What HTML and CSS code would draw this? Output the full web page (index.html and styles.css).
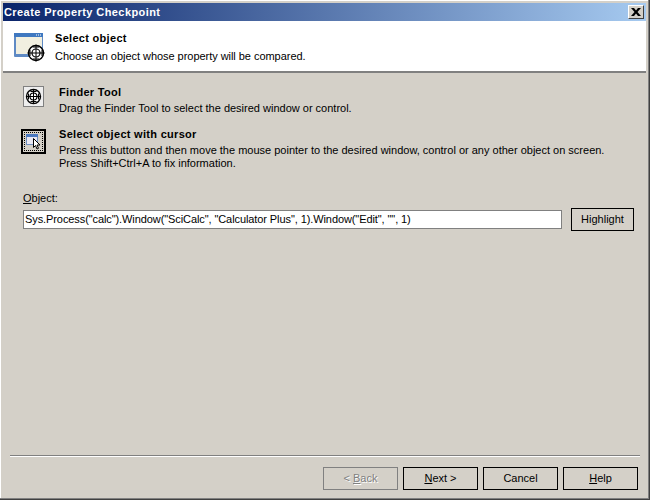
FILE: index.html
```html
<!DOCTYPE html>
<html lang="en">
<head>
<meta charset="utf-8">
<title>Create Property Checkpoint</title>
<link rel="stylesheet" href="styles.css">
</head>
<body>
<div class="window">
  <div class="titlebar">
    <span class="title">Create Property Checkpoint</span>
    <span class="close">
      <svg width="10" height="8" viewBox="0 0 10 8"><path d="M0 0h3l2 2.500L7 0h3L6.500 4 10 8H7L5 5.500 3 8H0l3.500-4z" fill="#000"/></svg>
    </span>
  </div>
  <header class="banner">
    <svg class="banner-icon" width="32" height="30" viewBox="0 0 32 30">
      <rect x="0" y="0" width="29" height="24" rx="1" fill="#5f8ac4"/>
      <rect x="2" y="4" width="26" height="17" fill="#f1efe0"/>
      <rect x="0" y="0" width="29" height="4" fill="#3f78c0"/>
      <path d="M22 2h1M24 2h1M26 2h1" stroke="#fff" fill="none"/>
      <circle cx="22" cy="20" r="7.500" fill="#fff" stroke="#000" stroke-width="1.500"/>
      <circle cx="22" cy="20" r="4" fill="none" stroke="#000" stroke-width="1.200"/>
      <path d="M22 11.500v17M13.500 20h17M19 14h6M19 26h6M16 17v6M28 17v6" stroke="#000" fill="none"/>
    </svg>
    <div class="banner-text">
      <div class="heading">Select object</div>
      <div class="sub">Choose an object whose property will be compared.</div>
    </div>
  </header>
  <main class="content">
    <div class="option option-finder">
      <span class="tool tool-finder">
        <svg width="17" height="17" viewBox="0 0 17 17">
          <circle cx="8.500" cy="8.500" r="7" fill="#fff" stroke="#000" stroke-width="1.400"/>
          <circle cx="8.500" cy="8.500" r="3.500" fill="none" stroke="#000" stroke-width="1.200"/>
          <path d="M8.500 1v15M1 8.500h15M5.500 3.500h6M5.500 13.500h6M3.500 5.500v6M13.500 5.500v6" stroke="#000" fill="none"/>
        </svg>
      </span>
      <div class="option-text">
        <div class="heading">Finder Tool</div>
        <div>Drag the Finder Tool to select the desired window or control.</div>
      </div>
    </div>
    <div class="option option-cursor">
      <span class="tool tool-cursor">
        <span class="dots">
          <svg width="16" height="16" viewBox="0 0 16 16">
            <rect x="0.500" y="0.500" width="11" height="10" fill="#e8e8f4" stroke="#6f8fc0"/>
            <rect x="0" y="0" width="12" height="3" fill="#4a78c0"/>
            <path d="M7.500 4.500v9l2-2 1.500 3.500 1.500-.7-1.500-3.300h3z" fill="#fff" stroke="#000"/>
          </svg>
        </span>
      </span>
      <div class="option-text">
        <div class="heading">Select object with cursor</div>
        <div>Press this button and then move the mouse pointer to the desired window, control or any other object on screen.</div>
        <div>Press Shift+Ctrl+A to fix information.</div>
      </div>
    </div>
    <label class="field-label"><u>O</u>bject:</label>
    <div class="field-row">
      <div class="input">Sys.Process("calc").Window("SciCalc", "Calculator Plus", 1).Window("Edit", "", 1)</div>
      <button class="btn btn-highlight">Hi<u>g</u>hlight</button>
    </div>
  </main>
  <footer class="footer">
    <div class="rule"></div>
    <div class="buttons">
      <button class="btn btn-nav btn-disabled">&lt; <u>B</u>ack</button>
      <button class="btn btn-nav"><u>N</u>ext &gt;</button>
      <button class="btn btn-nav">Cancel</button>
      <button class="btn btn-nav"><u>H</u>elp</button>
    </div>
  </footer>
</div>
</body>
</html>
```
FILE: styles.css
```css
* { box-sizing: border-box; }
html, body { margin: 0; padding: 0; }
body {
  width: 650px;
  height: 500px;
  overflow: hidden;
  font-family: "Liberation Sans", Arial, sans-serif;
  font-size: 11px;
  line-height: 13px;
  color: #000;
  background: #d4d0c8;
}
.window {
  width: 650px;
  height: 500px;
  display: flex;
  flex-direction: column;
  background: #d4d0c8;
  padding: 3px;
  border-right: 1px solid #404040;
  border-bottom: 1px solid #404040;
  box-shadow: inset -1px -1px 0 #808080, inset 1px 1px 0 #fff;
}
.titlebar {
  height: 18px;
  flex: none;
  display: flex;
  align-items: center;
  justify-content: space-between;
  padding: 0 2px 0 1px;
  background: linear-gradient(90deg, #0a246a, #a6caf0);
  color: #fff;
  font-weight: 700;
  letter-spacing: 0.42px;
}
.close {
  width: 16px;
  height: 14px;
  display: flex;
  align-items: center;
  justify-content: center;
  background: #d4d0c8;
  border: 1px solid;
  border-color: #fff #404040 #404040 #fff;
}
.banner {
  height: 52px;
  flex: none;
  display: flex;
  align-items: flex-start;
  background: #fff;
  border-bottom: 2px solid #808080;
  padding: 12px 0 0 11px;
}
.banner-text { margin-left: 9px; margin-top: -1px; }
.banner-icon { flex: none; }
.heading { font-weight: 700; letter-spacing: 0.3px; }
.sub { margin-top: 5px; letter-spacing: -0.04px; }
.content {
  flex: 1;
  padding: 13px 12px 0 18px;
  display: flex;
  flex-direction: column;
}
.option { display: flex; align-items: flex-start; }
.option-text { margin-left: 14px; }
.option-finder .option-text > div + div { margin-top: 3px; }
.option-cursor { margin-top: 13px; }
.option-cursor .option-text { margin-left: 13px; }
.option-cursor .heading { margin-bottom: 3px; }
.tool {
  flex: none;
  display: flex;
  align-items: center;
  justify-content: center;
}
.tool-finder {
  width: 21px;
  height: 21px;
  margin-left: 2px;
  margin-right: 1px;
  background: #eeeeee;
  border: 1px solid #808080;
}
.tool-cursor {
  width: 25px;
  height: 25px;
  margin-top: 1px;
  border: 2px solid #000;
  padding: 1px;
}
.dots {
  width: 100%;
  height: 100%;
  display: flex;
  align-items: center;
  justify-content: center;
  border: 1px dotted #000;
}
.field-label { margin-top: 22px; margin-left: 2px; }
.field-row {
  margin-top: 3px;
  display: flex;
  align-items: center;
  justify-content: space-between;
  margin-left: 2px;
}
.input {
  width: 539px;
  height: 19px;
  background: #fff;
  border: 1px solid #808080;
  padding: 2px 0 0 1px;
  white-space: nowrap;
  overflow: hidden;
  letter-spacing: -0.09px;
}
.btn {
  font: inherit;
  color: #000;
  background: #d4d0c8;
  border: 1px solid #000;
  padding: 0;
  height: 23px;
}
.btn-highlight { width: 63px; }
.footer { flex: none; padding: 0 8px 6px 7px; }
.rule {
  height: 2px;
  margin-right: -2px;
  background: #808080;
  border-bottom: 1px solid #fff;
  margin-bottom: 10px;
}
.buttons {
  display: flex;
  justify-content: flex-end;
  gap: 5px;
}
.btn-nav { width: 75px; }
.btn-disabled { color: #808080; border-color: #808080; text-shadow: 1px 1px 0 #fff; }
```
